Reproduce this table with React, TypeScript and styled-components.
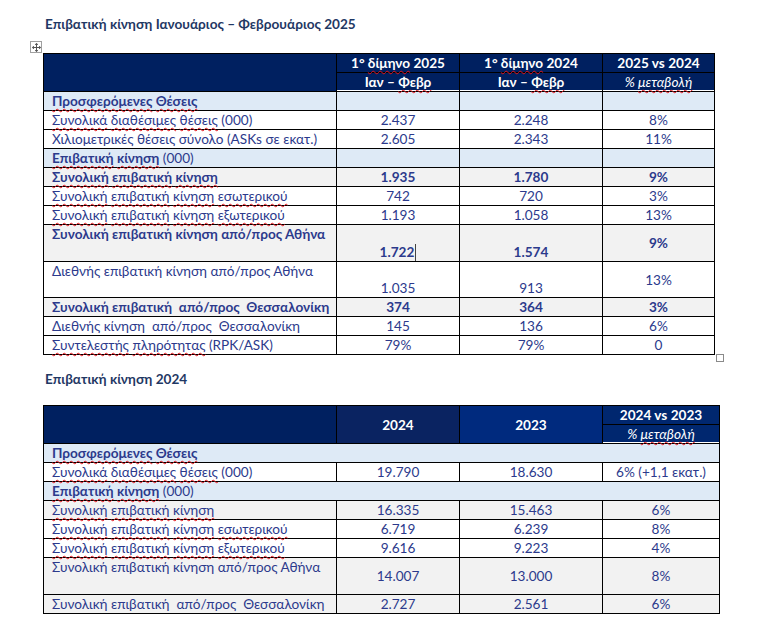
import React from 'react';
import styled, { createGlobalStyle, css } from 'styled-components';

const NAVY = '#002060';
const TEXT = '#2c3a8c';
const TITLE = '#1f3864';
const BLUE_BG = '#deeaf6';
const GRAY_BG = '#f2f2f2';
const FS = 13.6;

const Global = createGlobalStyle`
  html, body { margin: 0; padding: 0; background: #fff; }
  body { font-family: Lato, "Open Sans", sans-serif; }
`;

const Page = styled.div`
  width: 765px;
  height: 631px;
  box-sizing: border-box;
  padding: 15px 0 0 43px;
  overflow: hidden;
`;

const Title = styled.h2<{ $mt: number }>`
  margin: ${(p) => p.$mt}px 0 0 2px;
  font-size: ${FS}px;
  line-height: 18px;
  font-weight: 700;
  color: ${TITLE};
`;

const TableWrap = styled.div<{ $mt: number; $w: number }>`
  position: relative;
  margin-top: ${(p) => p.$mt}px;
  width: ${(p) => p.$w}px;
`;

const MoveHandle = styled.div`
  position: absolute;
  left: -13px;
  top: -12px;
  width: 10px;
  height: 10px;
  border: 1px solid #a0a0a0;
  background: #fff;
  display: flex;
  align-items: center;
  justify-content: center;
`;

const ResizeHandle = styled.div`
  position: absolute;
  right: -9px;
  bottom: -7px;
  width: 6px;
  height: 6px;
  border: 1px solid #8a8a8a;
  background: #fff;
`;

const Grid = styled.table`
  border-collapse: collapse;
  table-layout: fixed;
  width: 100%;
  font-size: ${FS}px;
  color: ${TEXT};
`;

type Bg = 'blue' | 'gray' | 'white';
const bgColor = (b: Bg) => (b === 'blue' ? BLUE_BG : b === 'gray' ? GRAY_BG : '#fff');

const HeadCell = styled.th<{ $bg?: string; $line?: boolean; $italic?: boolean }>`
  border: 1px solid #000;
  background: ${(p) => p.$bg ?? NAVY};
  color: #fff;
  font-weight: ${(p) => (p.$italic ? 400 : 700)};
  font-style: ${(p) => (p.$italic ? 'italic' : 'normal')};
  text-align: center;
  padding: 0;
  height: 18px;
  line-height: 18px;
  white-space: nowrap;
  ${(p) =>
    p.$line &&
    css`
      box-shadow: inset 0 -1px 0 #fff;
    `}
`;

const LabelCell = styled.td<{ $bg: Bg; $bold?: boolean; $h: number }>`
  border: 1px solid #000;
  background: ${(p) => bgColor(p.$bg)};
  font-weight: ${(p) => (p.$bold ? 700 : 400)};
  padding: 0 0 0 8px;
  height: ${(p) => p.$h}px;
  line-height: 18px;
  vertical-align: top;
  white-space: pre;
`;

const ValueCell = styled.td<{ $bg: Bg; $bold?: boolean; $v?: 'top' | 'middle' | 'bottom' }>`
  border: 1px solid #000;
  background: ${(p) => bgColor(p.$bg)};
  font-weight: ${(p) => (p.$bold ? 700 : 400)};
  text-align: center;
  padding: 0;
  line-height: 18px;
  vertical-align: ${(p) => p.$v ?? 'middle'};
  white-space: nowrap;
`;

const Sq = styled.span`
  text-decoration: underline wavy #e3141b;
  text-decoration-thickness: 1px;
  text-underline-offset: 2px;
  text-decoration-skip-ink: none;
`;

const Caret = styled.span`
  display: inline-block;
  width: 1px;
  height: 17px;
  background: #444;
  vertical-align: bottom;
  margin-left: 1px;
`;

const sqWords = (text: string) => {
  const words = text.split(' ');
  return words.map((w, i) => (
    <React.Fragment key={i}>
      <Sq>{w}</Sq>
      {i < words.length - 1 ? ' ' : ''}
    </React.Fragment>
  ));
};

const MoveIcon = () => (
  <svg width="9" height="9" viewBox="0 0 9 9" fill="none" stroke="#555" strokeWidth="1">
    <path d="M4.5 0.5v8M0.5 4.5h8" />
    <path d="M3 1.8l1.5-1.3 1.5 1.3M3 7.2l1.5 1.3 1.5-1.3M1.8 3l-1.3 1.5 1.3 1.5M7.2 3l1.3 1.5-1.3 1.5" />
  </svg>
);

type Row = {
  label: React.ReactNode;
  bg: Bg;
  bold?: boolean;
  values?: React.ReactNode[];
  h?: number;
  v?: ('top' | 'middle' | 'bottom')[];
  merged?: boolean;
};

const table1: Row[] = [
  { label: sqWords('Προσφερόμενες Θέσεις'), bg: 'blue', bold: true, values: ['', '', ''] },
  { label: <>{sqWords('Συνολικά διαθέσιμες θέσεις')} (000)</>, bg: 'white', values: ['2.437', '2.248', '8%'] },
  { label: 'Χιλιομετρικές θέσεις σύνολο (ASKs σε εκατ.)', bg: 'white', values: ['2.605', '2.343', '11%'] },
  {
    label: (
      <>
        <b>{sqWords('Επιβατική κίνηση')}</b> (000)
      </>
    ),
    bg: 'blue',
    values: ['', '', ''],
  },
  { label: sqWords('Συνολική επιβατική κίνηση'), bg: 'gray', bold: true, values: ['1.935', '1.780', '9%'] },
  { label: sqWords('Συνολική επιβατική κίνηση εσωτερικού'), bg: 'white', values: ['742', '720', '3%'] },
  { label: sqWords('Συνολική επιβατική κίνηση εξωτερικού'), bg: 'white', values: ['1.193', '1.058', '13%'], h: 16 },
  {
    label: 'Συνολική επιβατική κίνηση από/προς Αθήνα',
    bg: 'gray',
    bold: true,
    values: [
      <>
        1.722
        <Caret />
      </>,
      '1.574',
      '9%',
    ],
    h: 36,
    v: ['bottom', 'bottom', 'middle'],
  },
  {
    label: 'Διεθνής επιβατική κίνηση από/προς Αθήνα',
    bg: 'white',
    values: ['1.035', '913', '13%'],
    h: 35,
    v: ['bottom', 'bottom', 'middle'],
  },
  { label: 'Συνολική επιβατική  από/προς  Θεσσαλονίκη', bg: 'gray', bold: true, values: ['374', '364', '3%'] },
  { label: 'Διεθνής κίνηση  από/προς  Θεσσαλονίκη', bg: 'white', values: ['145', '136', '6%'] },
  {
    label: (
      <>
        {sqWords('Συντελεστής πληρότητας')} (RPK/ASK)
      </>
    ),
    bg: 'white',
    values: ['79%', '79%', '0'],
    h: 17,
  },
];

const table2: Row[] = [
  { label: sqWords('Προσφερόμενες Θέσεις'), bg: 'blue', bold: true, merged: true, h: 17 },
  {
    label: <>{sqWords('Συνολικά διαθέσιμες θέσεις')} (000)</>,
    bg: 'white',
    values: ['19.790', '18.630', '6% (+1,1 εκατ.)'],
  },
  {
    label: (
      <>
        <b>{sqWords('Επιβατική κίνηση')}</b> (000)
      </>
    ),
    bg: 'blue',
    merged: true,
  },
  { label: sqWords('Συνολική επιβατική κίνηση'), bg: 'gray', values: ['16.335', '15.463', '6%'] },
  { label: sqWords('Συνολική επιβατική κίνηση εσωτερικού'), bg: 'white', values: ['6.719', '6.239', '8%'] },
  { label: sqWords('Συνολική επιβατική κίνηση εξωτερικού'), bg: 'white', values: ['9.616', '9.223', '4%'] },
  {
    label: 'Συνολική επιβατική κίνηση από/προς Αθήνα',
    bg: 'gray',
    values: ['14.007', '13.000', '8%'],
    h: 36,
  },
  { label: 'Συνολική επιβατική  από/προς  Θεσσαλονίκη', bg: 'gray', values: ['2.727', '2.561', '6%'] },
];

const Body = ({ rows }: { rows: Row[] }) => (
  <tbody>
    {rows.map((r, i) => (
      <tr key={i}>
        {r.merged ? (
          <LabelCell $bg={r.bg} $bold={r.bold} $h={r.h ?? 18} colSpan={4}>
            {r.label}
          </LabelCell>
        ) : (
          <>
            <LabelCell $bg={r.bg} $bold={r.bold} $h={r.h ?? 18}>
              {r.label}
            </LabelCell>
            {(r.values ?? []).map((val, j) => (
              <ValueCell key={j} $bg={r.bg} $bold={r.bold} $v={r.v?.[j]}>
                {val}
              </ValueCell>
            ))}
          </>
        )}
      </tr>
    ))}
  </tbody>
);

export default function App() {
  return (
    <Page>
      <Global />
      <Title $mt={0}>Επιβατική κίνηση Ιανουάριος – Φεβρουάριος 2025</Title>
      <TableWrap $mt={20} $w={672}>
        <MoveHandle>
          <MoveIcon />
        </MoveHandle>
        <Grid>
          <colgroup>
            <col style={{ width: 293 }} />
            <col style={{ width: 123 }} />
            <col style={{ width: 143 }} />
            <col />
          </colgroup>
          <thead>
            <tr>
              <HeadCell rowSpan={2} />
              <HeadCell>
                1° <Sq>δίμηνο</Sq> 2025
              </HeadCell>
              <HeadCell>
                1° <Sq>δίμηνο</Sq> 2024
              </HeadCell>
              <HeadCell>2025 vs 2024</HeadCell>
            </tr>
            <tr>
              <HeadCell $line>
                Ιαν – <Sq>Φεβρ</Sq>
              </HeadCell>
              <HeadCell $line>
                Ιαν – <Sq>Φεβρ</Sq>
              </HeadCell>
              <HeadCell $line $italic>
                % <Sq>μεταβολή</Sq>
              </HeadCell>
            </tr>
          </thead>
          <Body rows={table1} />
        </Grid>
        <ResizeHandle />
      </TableWrap>

      <Title $mt={15}>Επιβατική κίνηση 2024</Title>
      <TableWrap $mt={17} $w={677}>
        <Grid>
          <colgroup>
            <col style={{ width: 293 }} />
            <col style={{ width: 123 }} />
            <col style={{ width: 143 }} />
            <col />
          </colgroup>
          <thead>
            <tr>
              <HeadCell rowSpan={2} />
              <HeadCell rowSpan={2} $bg="#0a2361">
                2024
              </HeadCell>
              <HeadCell rowSpan={2} $bg="#002a7e">
                2023
              </HeadCell>
              <HeadCell $bg="#00276f">2024 vs 2023</HeadCell>
            </tr>
            <tr>
              <HeadCell $bg="#00276f" $line $italic>
                % <Sq>μεταβολή</Sq>
              </HeadCell>
            </tr>
          </thead>
          <Body rows={table2} />
        </Grid>
      </TableWrap>
    </Page>
  );
}
